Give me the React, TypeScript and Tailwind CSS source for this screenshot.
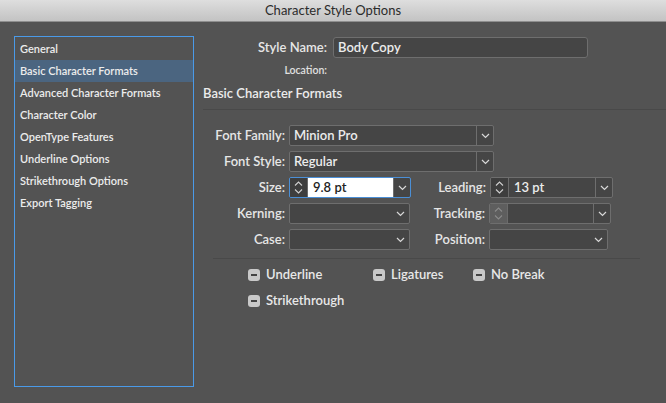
const font = { fontFamily: '"Lato", "Open Sans", sans-serif' };

const sections = [
  "General",
  "Basic Character Formats",
  "Advanced Character Formats",
  "Character Color",
  "OpenType Features",
  "Underline Options",
  "Strikethrough Options",
  "Export Tagging",
];

function Chevron() {
  return (
    <svg width="9" height="6" viewBox="0 0 9 6" fill="none">
      <path d="M1 1l3.5 3.5L8 1" stroke="#d8d8d8" strokeWidth="1.2" />
    </svg>
  );
}

function Stepper({ disabled }: { disabled?: boolean }) {
  const c = disabled ? "#8a8a8a" : "#d0d0d0";
  return (
    <div className={`flex h-full w-[18px] flex-col items-center justify-center gap-[3px] border-r border-[#6b6b6b] ${disabled ? "bg-[#5e5e5e]" : "bg-[#3e3e3e]"}`}>
      <svg width="9" height="5" viewBox="0 0 9 5" fill="none">
        <path d="M1 4.5l3.5-3.5L8 4.5" stroke={c} strokeWidth="1.1" />
      </svg>
      <svg width="9" height="5" viewBox="0 0 9 5" fill="none">
        <path d="M1 0.5l3.5 3.5L8 0.5" stroke={c} strokeWidth="1.1" />
      </svg>
    </div>
  );
}

function Select({ w, value, split }: { w: string; value?: string; split?: boolean }) {
  return (
    <div className={`flex h-[21px] ${w} items-center rounded-[2px] border border-[#6e6e6e] bg-[#454545]`}>
      <span className="flex-1 pl-[4px] text-[13px] font-semibold text-[#ececec]">{value}</span>
      <div className={`flex h-full w-[17px] items-center justify-center ${split ? "border-l border-[#6e6e6e]" : ""}`}>
        <Chevron />
      </div>
    </div>
  );
}

function Spin({ w, value, focused, disabled }: { w: string; value?: string; focused?: boolean; disabled?: boolean }) {
  return (
    <div className={`flex h-[21px] ${w} items-center overflow-hidden rounded-[2px] border ${focused ? "border-[#4b8fd6]" : "border-[#6e6e6e]"} bg-[#454545]`}>
      <Stepper disabled={disabled} />
      <span className={`flex h-full flex-1 items-center pl-[5px] text-[13px] font-semibold ${focused ? "bg-white text-[#222]" : "text-[#ececec]"}`}>
        {value}
      </span>
      <div className="flex h-full w-[17px] items-center justify-center border-l border-[#6e6e6e]">
        <Chevron />
      </div>
    </div>
  );
}

function Label({ w, children }: { w: string; children: string }) {
  return <span className={`${w} text-right text-[13px] font-semibold text-[#e6e6e6]`}>{children}</span>;
}

function Check({ label, w }: { label: string; w?: string }) {
  return (
    <div className={`flex items-center gap-[6px] ${w ?? ""}`}>
      <div className="flex h-[12px] w-[12px] items-center justify-center rounded-[3px] bg-[#c9c9c9]">
        <div className="h-[2px] w-[6px] bg-[#444]" />
      </div>
      <span className="text-[13px] font-semibold text-[#e8e8e8]">{label}</span>
    </div>
  );
}

export default function App() {
  return (
    <div className="flex h-[403px] w-[666px] flex-col overflow-hidden bg-[#535353]" style={font}>
      <div className="flex h-[22px] items-center justify-center border-b border-[#8e8e8e] bg-gradient-to-b from-[#dedede] to-[#c3c3c3]">
        <span className="text-[13px] text-[#2b2b2b]">Character Style Options</span>
      </div>
      <div className="flex flex-1">
        <div className="ml-[14px] mt-[14px] h-[351px] w-[180px] border border-[#4a9ae8] pt-[1px]">
          {sections.map((s, i) => (
            <div
              key={s}
              className={`flex h-[22px] items-center pl-[5px] text-[11px] font-semibold text-[#ececec] ${i === 1 ? "bg-[#4b6580]" : ""}`}
            >
              {s}
            </div>
          ))}
        </div>

        <div className="ml-[9px] flex flex-1 flex-col">
          <div className="mt-[15px] flex items-center gap-[6px]">
            <Label w="w-[124px]">Style Name:</Label>
            <div className="flex h-[21px] w-[255px] items-center rounded-[3px] border border-[#6e6e6e] bg-[#454545] pl-[4px] text-[13px] font-semibold text-[#ececec]">
              Body Copy
            </div>
          </div>
          <div className="mt-[5px] flex">
            <span className="w-[124px] text-right text-[10.5px] font-semibold text-[#e0e0e0]">Location:</span>
          </div>
          <div className="mt-[5px] text-[13px] font-semibold text-[#ececec]">Basic Character Formats</div>
          <div className="mt-[6px] h-px bg-[#494949]" />

          <div className="mt-[15px] flex flex-col gap-[5px]">
            <div className="flex items-center gap-[4px]">
              <Label w="w-[82px]">Font Family:</Label>
              <Select w="w-[205px]" value="Minion Pro" split />
            </div>
            <div className="flex items-center gap-[4px]">
              <Label w="w-[82px]">Font Style:</Label>
              <Select w="w-[205px]" value="Regular" split />
            </div>
            <div className="flex items-center gap-[4px]">
              <Label w="w-[82px]">Size:</Label>
              <Spin w="w-[122px]" value="9.8 pt" focused />
              <Label w="w-[71px]">Leading:</Label>
              <Spin w="w-[123px]" value="13 pt" />
            </div>
            <div className="flex items-center gap-[4px]">
              <Label w="w-[82px]">Kerning:</Label>
              <Select w="w-[121px]" />
              <Label w="w-[71px]">Tracking:</Label>
              <Spin w="w-[122px]" disabled />
            </div>
            <div className="flex items-center gap-[4px]">
              <Label w="w-[82px]">Case:</Label>
              <Select w="w-[121px]" />
              <Label w="w-[71px]">Position:</Label>
              <Select w="w-[119px]" />
            </div>
          </div>

          <div className="ml-[10px] mr-[26px] mt-[8px] h-px bg-[#494949]" />

          <div className="ml-[45px] mt-[6px] flex flex-col gap-[6px]">
            <div className="flex">
              <Check label="Underline" w="w-[125px]" />
              <Check label="Ligatures" w="w-[100px]" />
              <Check label="No Break" />
            </div>
            <Check label="Strikethrough" />
          </div>
        </div>
      </div>
    </div>
  );
}
